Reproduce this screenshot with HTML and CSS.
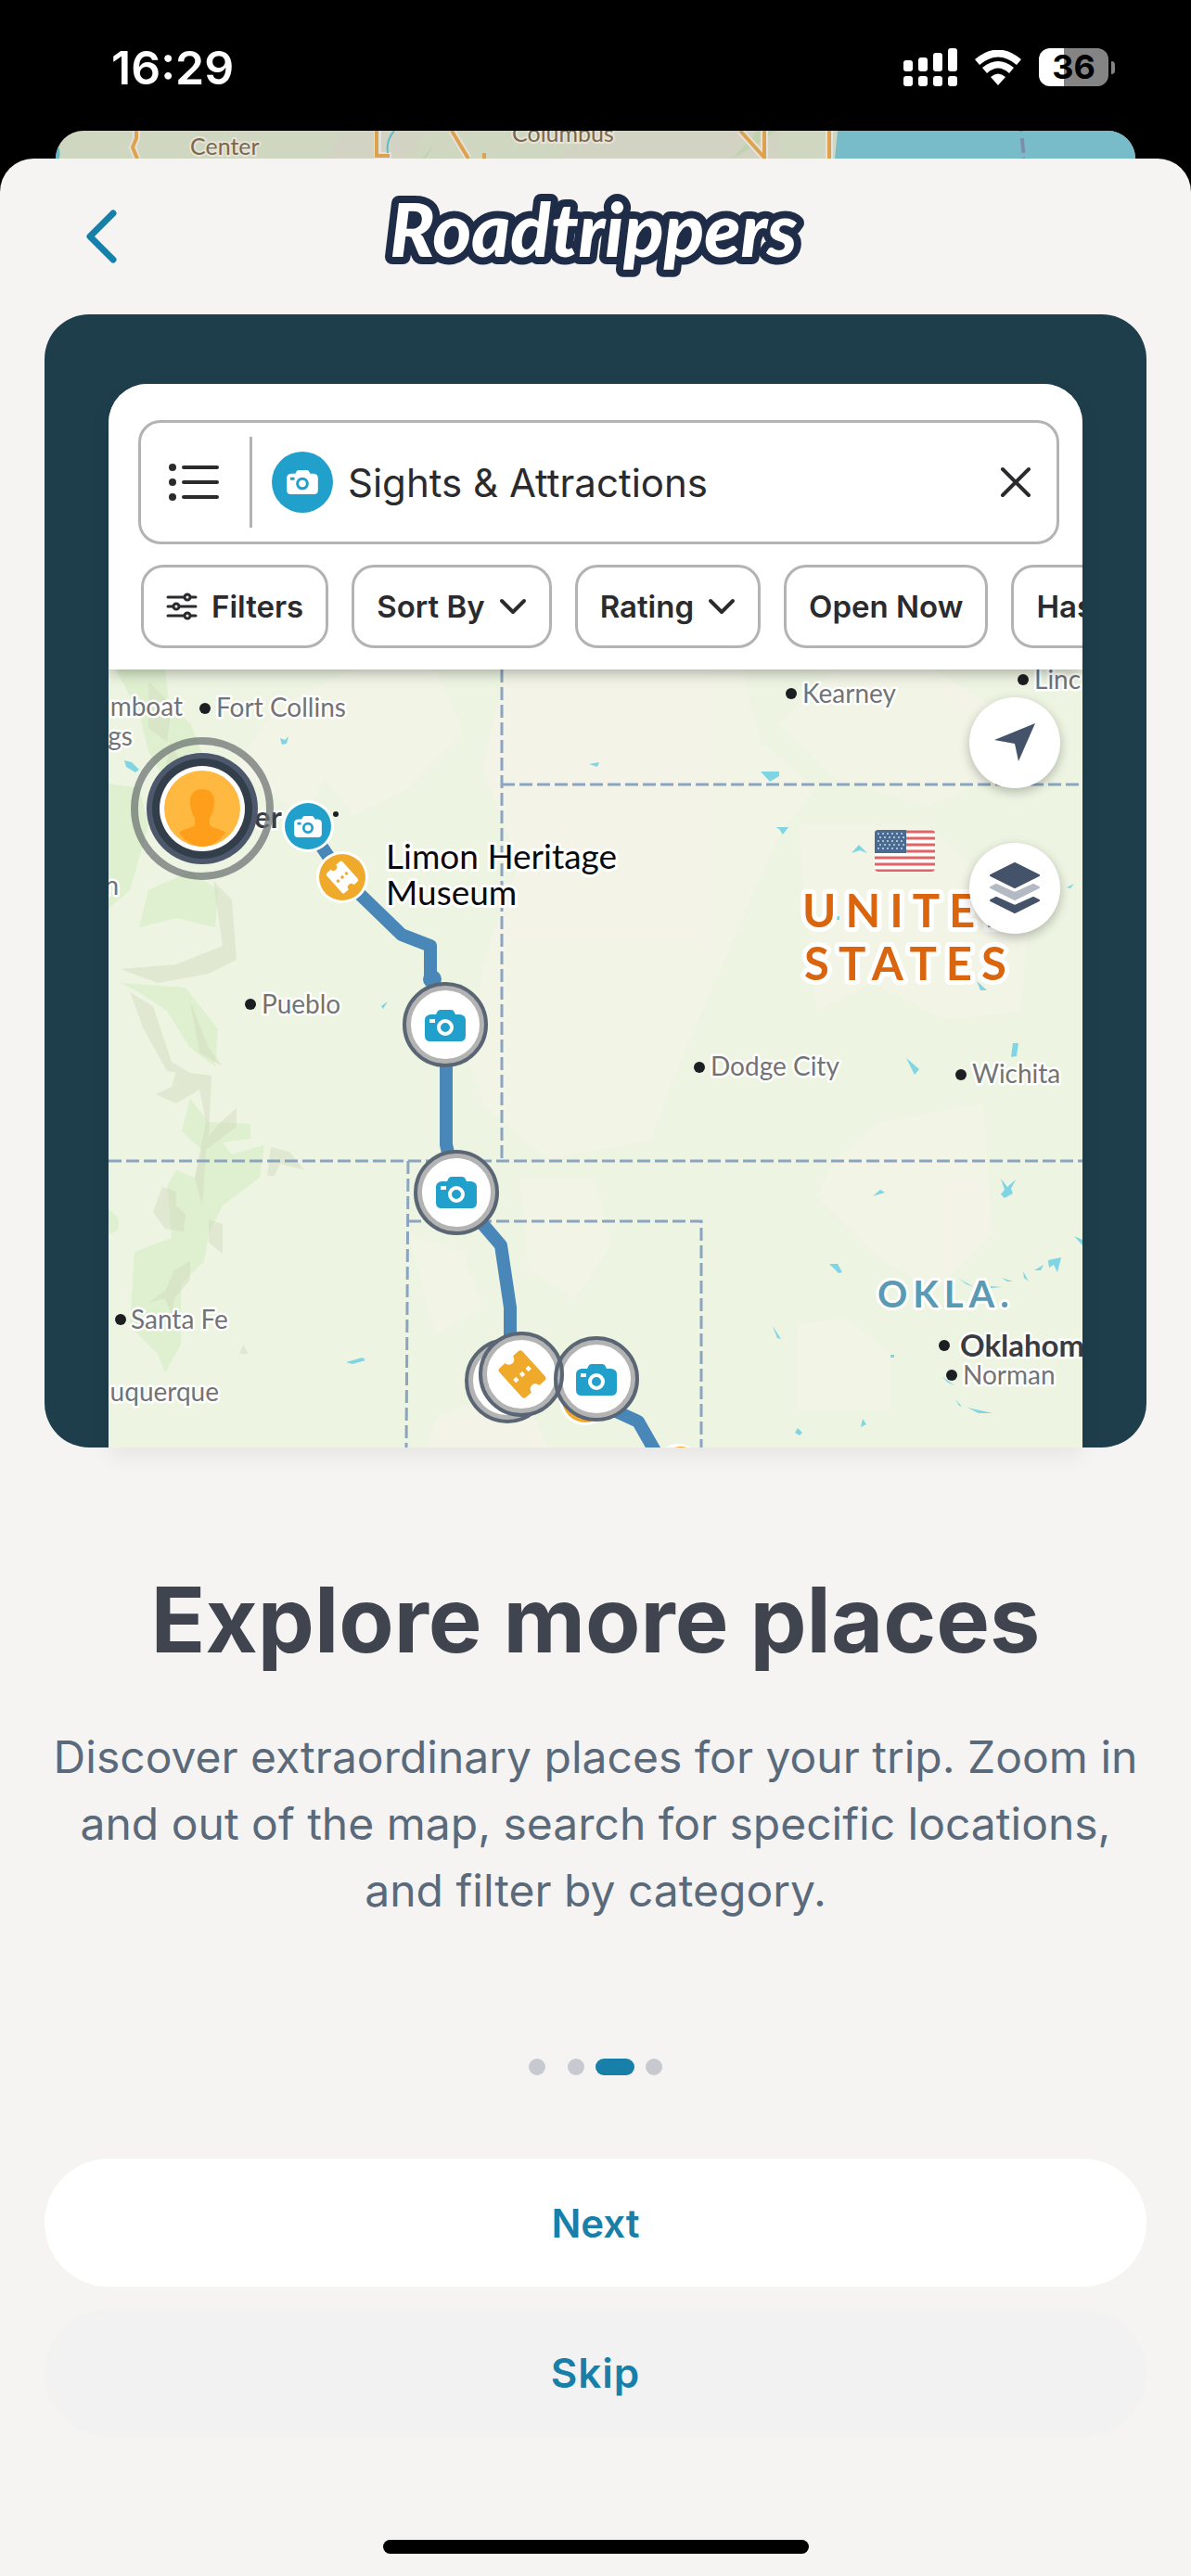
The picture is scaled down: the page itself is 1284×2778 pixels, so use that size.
FILE: index.html
```html
<!DOCTYPE html>
<html lang="en">
  <head>
    <meta charset="utf-8">
    <title>Roadtrippers</title>
    <meta name="viewport" content="width=device-width, initial-scale=1, viewport-fit=cover">
    <link rel="stylesheet" href="styles.css">
  </head>
  <body>
    <!-- shared icons -->
    <svg class="sprite" aria-hidden="true">
      <symbol id="camera" viewBox="0 0 44 34">
        <path fill="currentColor" fill-rule="evenodd" d="M13 3 Q14 0 17 0 H28 Q31 0 32 3 L33 5 H38 Q44 6 44 11 V28 Q44 34 38 34 H6 Q0 34 0 28 V11 Q0 6 6 5 H12 Z M5 10 V14 H11 V10 Z M22 10 A9 9 0 1 0 22 28 A9 9 0 1 0 22 10 Z M22 14 A5 5 0 1 1 22 24 A5 5 0 1 1 22 14 Z"/>
      </symbol>
      <symbol id="ticket" viewBox="-25 -25 50 50">
        <g transform="rotate(48)">
          <path fill="currentColor" fill-rule="evenodd" d="M-16 -15 H16 Q19 -15 19 -12 V-5 A5 5 0 0 0 19 5 V12 Q19 15 16 15 H-16 Q-19 15 -19 12 V5 A5 5 0 0 0 -19 -5 V-12 Q-19 -15 -16 -15 Z M-2 -10 V-6 H2 V-10 Z M-2 -2 V2 H2 V-2 Z M-2 6 V10 H2 V6 Z"/>
        </g>
      </symbol>
      <symbol id="chevron" viewBox="0 0 30 18">
        <path d="M3 3 L15 15 L27 3" fill="none" stroke="currentColor" stroke-width="4" stroke-linecap="round" stroke-linejoin="round"/>
      </symbol>
    </svg>

    <div class="status-bar">
      <span class="time">16:29</span>
      <div class="status-icons">
        <svg width="58" height="41" viewBox="0 0 58 41" fill="#fff">
          <rect x="0" y="13" width="10" height="12" rx="3"/>
          <rect x="16" y="10" width="10" height="15" rx="3"/>
          <rect x="32" y="5" width="10" height="20" rx="3"/>
          <rect x="48" y="0" width="10" height="25" rx="3"/>
          <rect x="0" y="30" width="10" height="11" rx="3"/>
          <rect x="16" y="30" width="10" height="11" rx="3"/>
          <rect x="32" y="30" width="10" height="11" rx="3"/>
          <rect x="48" y="30" width="10" height="11" rx="3"/>
        </svg>
        <svg width="52" height="38" viewBox="0 0 52 38" fill="#fff">
          <path d="M1 10 Q26 -11 51 10 L46 16 Q26 -1 6 16 Z"/>
          <path d="M9 19 Q26 5 43 19 L38 25 Q26 14 14 25 Z"/>
          <path d="M18 29 Q26 22 34 29 L26 38 Z"/>
        </svg>
        <div class="battery">
          <span class="battery-level">36</span>
          <span class="battery-cap"></span>
        </div>
      </div>
    </div>

    <svg class="peek" viewBox="60 141 1164 30" preserveAspectRatio="none">
      <rect x="60" y="141" width="1164" height="30" fill="#cfd7c0"/>
      <path d="M370 141 H460 L440 171 H350 Z M640 141 H840 V171 H600 Z" fill="#d3d3c4"/>
      <path d="M790 171 l16 -18 10 -12 h20 l-16 12 z M455 171 l12 -14 -8 14 z" fill="#bfd3ae"/>
      <path d="M60 152 q6 8 4 19 h-4 z" fill="#5dbccb"/>
      <g fill="none" stroke="#e4e2da" stroke-width="8">
        <path d="M147 141 v8 l-4 10 5 12 M407 141 v27 h15 M487 141 l18 30 M798 141 l27 30 M824 141 v30 M894 141 v30"/>
      </g>
      <g fill="none" stroke="#dda24e" stroke-width="4">
        <path d="M147 141 v8 l-4 10 5 12 M406 141 v27 h14 M487 141 l18 30 M798 141 l27 30 M824 141 v30 M894 141 v30 M522 165 v6"/>
      </g>
      <path d="M425 141 q-9 10 -7 24" fill="none" stroke="#5dbccb" stroke-width="2"/>
      <path d="M903 141 H1224 V171 H900 Z" fill="#78bcca"/>
      <path d="M1101 141 l3 30" stroke="#7f8cae" stroke-width="4" stroke-dasharray="1 7 16 5" fill="none"/>
      <text class="peek-label" x="205" y="167">Center</text>
      <text class="peek-label" x="552" y="153">Columbus</text>
    </svg>

    <main class="sheet">
      <header class="sheet-header">
        <button class="back" type="button" aria-label="Back">
          <svg width="34" height="58" viewBox="0 0 34 58">
            <path d="M30 4 L5 29 L30 54" fill="none" stroke="#1780a8" stroke-width="7" stroke-linecap="round" stroke-linejoin="round"/>
          </svg>
        </button>
        <svg class="logo" width="480" height="120" viewBox="0 0 480 120">
          <text x="238" y="82" text-anchor="middle">Roadtrippers</text>
        </svg>
      </header>

      <section class="hero">
        <div class="panel">
          <div class="panel-top">
            <div class="search">
              <button class="icon-button list-button" type="button" aria-label="List">
                <svg width="54" height="40" viewBox="0 0 54 40">
                  <g fill="#2b2b2d"><circle cx="4" cy="4" r="4"/><circle cx="4" cy="20" r="4"/><circle cx="4" cy="36" r="4"/></g>
                  <path d="M16 4 H52 M16 20 H52 M16 36 H52" stroke="#2b2b2d" stroke-width="4" stroke-linecap="round"/>
                </svg>
              </button>
              <span class="divider"></span>
              <span class="category"><svg width="34" height="26"><use href="#camera"/></svg></span>
              <input class="search-input" type="text" value="Sights &amp; Attractions" aria-label="Search places">
              <button class="icon-button" type="button" aria-label="Clear">
                <svg width="34" height="34" viewBox="0 0 34 34">
                  <path d="M3 3 L31 31 M31 3 L3 31" stroke="#2b2b2d" stroke-width="4" stroke-linecap="round"/>
                </svg>
              </button>
            </div>
            <div class="chips">
              <button class="chip" type="button">
                <svg width="34" height="30" viewBox="0 0 34 30" fill="#fff" stroke="#2b2b2d" stroke-width="3" stroke-linecap="round">
                  <path d="M2 5 H32 M2 15 H32 M2 25 H32"/>
                  <circle cx="23" cy="5" r="3"/><circle cx="11" cy="15" r="3"/><circle cx="23" cy="25" r="3"/>
                </svg>
                Filters
              </button>
              <button class="chip" type="button">Sort By <svg width="30" height="18"><use href="#chevron"/></svg></button>
              <button class="chip" type="button">Rating <svg width="30" height="18"><use href="#chevron"/></svg></button>
              <button class="chip" type="button">Open Now</button>
              <button class="chip" type="button">Has</button>
            </div>
          </div>

          <div class="map">
            <svg class="map-canvas" viewBox="117 722 1050 839">
              <rect x="117" y="722" width="1050" height="839" fill="#edf4e1"/>
              <!-- plains -->
              <g fill="#f4f4e8" opacity=".8">
                <path d="M380 722 H470 L500 790 L440 850 L380 880 L350 840 L330 880 L250 830 L300 760 Z"/>
                <path d="M545 722 H800 L820 800 L880 850 L840 900 L800 990 L770 1060 L740 1130 L700 1230 L590 1250 L520 1190 L500 1130 L530 1010 L560 930 L520 830 Z"/>
                <path d="M900 722 H1010 L1080 770 L1090 830 L1000 870 L900 840 L840 780 Z"/>
                <path d="M860 890 H1000 L1110 990 L1100 1090 L1020 1100 L940 1060 L880 1090 Z"/>
                <path d="M950 1210 L1060 1190 L1070 1330 L1010 1390 L950 1360 L880 1290 L900 1250 Z"/>
                <path d="M560 1270 H640 L660 1340 L620 1400 L570 1370 Z M860 1430 L910 1420 L960 1460 V1520 H860 Z M440 1330 L500 1350 L520 1410 L470 1440 Z"/>
                <path d="M470 1530 L560 1490 L590 1561 H460 Z"/>
              </g>
              <!-- forests -->
              <g fill="#d9efc9" opacity=".75">
                <path d="M125 722 H178 L182 760 L205 780 L225 830 L215 850 L180 845 L160 810 L150 770 Z"/>
                <path d="M117 845 L150 850 L160 890 L140 960 L117 980 Z"/>
                <path d="M160 960 L205 940 L235 960 L232 1000 L190 990 L150 1000 Z"/>
                <path d="M130 1060 L200 1065 L235 1110 L232 1150 L205 1130 L180 1090 L150 1070 Z"/>
                <path d="M205 1185 L225 1210 L270 1212 V1228 L240 1232 L250 1245 L285 1235 L280 1270 L240 1300 L225 1330 L220 1360 L195 1385 V1450 L178 1480 L170 1460 L140 1430 L145 1350 L185 1335 L180 1280 L190 1262 L210 1270 L218 1240 L196 1220 Z"/>
                <path d="M117 1305 q14 6 10 22 l-10 4 z"/>
              </g>
              <g fill="#cdd3b6" opacity=".35">
                <path d="M160 735 L185 760 L180 800 L160 785 Z M185 800 L210 860 L190 890 L175 840 Z"/>
                <path d="M230 950 L250 970 L255 1035 L225 1050 L170 1060 L130 1045 L190 1040 L240 1020 Z"/>
                <path d="M140 1070 L165 1085 L185 1145 L210 1160 L180 1155 L155 1110 Z M205 1080 L225 1130 L240 1150 L215 1135 Z"/>
                <path d="M190 1155 L228 1160 L225 1225 L238 1210 L255 1195 V1215 L222 1240 L218 1300 L210 1270 L222 1210 L215 1175 L190 1190 L168 1180 L185 1172 Z"/>
                <path d="M175 1280 L190 1285 V1300 L200 1310 L198 1328 L178 1325 L165 1307 Z M225 1315 L240 1320 V1352 L225 1340 Z M188 1370 L205 1360 V1380 L188 1400 L185 1418 L178 1400 L160 1405 L178 1392 Z"/>
                <path d="M292 1237 L312 1242 L328 1262 L302 1255 L296 1268 H288 Z M262 1450 l6 10 h-10 z"/>
              </g>
              <!-- lakes -->
              <g fill="#7fd5e3">
                <path d="M134 820 l8 2 8 8 -4 3 -10 -6 z M302 796 l5 2 4 -4 -2 8 -5 1 z M635 824 l11 -2 -2 5 z"/>
                <path d="M820 832 h20 v5 l-10 6 z M836 892 h14 l-6 8 -4 -6 z M918 920 l8 -9 9 9 -8 -3 z M1150 957 l8 -4 -4 5 z"/>
                <path d="M977 1141 l14 12 -5 6 z M1092 1125 h6 l-2 14 -6 1 z M1053 1058 l11 10 h-7 z M900 988 h5 v4 h-5 z M411 1085 l7 -5 -5 8 z"/>
                <path d="M941 1290 l8 -7 5 3 z M1079 1271 l7 9 9 -8 -5 10 2 5 -9 5 -4 -4 4 -5 z M894 1363 h9 l5 9 -4 1 z M833 1430 l9 14 -4 -1 z"/>
                <path d="M1034 1379 l16 9 -8 -3 z M1068 1387 l12 1 -12 1 z M1080 1378 l12 4 -6 0 z M1103 1371 l6 11 -5 -4 z M1115 1370 l10 -6 -3 6 z M1130 1359 l14 -3 -4 16 -4 -8 -5 3 z M1158 1333 l9 4 v6 z"/>
                <path d="M1015 1484 l14 10 -7 -3 z M1030 1509 l7 8 -3 -1 z M1043 1518 l27 6 -15 0 z M860 1540 l5 5 -3 3 -5 -3 z M930 1530 l4 6 -6 3 z M960 1461 h4 v3 h-4 z M373 1469 l18 -5 3 3 -14 4 z"/>
              </g>
              <!-- state borders -->
              <g fill="none" stroke="#8ba4bf" stroke-width="3" stroke-dasharray="14 5">
                <path d="M541 722 V1252"/>
                <path d="M541 846 H1167"/>
                <path d="M117 1252 H1167"/>
                <path d="M440 1252 L438 1561"/>
                <path d="M440 1317 H756 V1561"/>
              </g>

              <g class="city">
                <text x="197" y="772" text-anchor="end">mboat</text>
                <text x="143" y="804" text-anchor="end">gs</text>
                <text x="128" y="965" text-anchor="end">n</text>
                <text x="233" y="773">Fort Collins</text>
                <text x="282" y="1093">Pueblo</text>
                <text x="865" y="758">Kearney</text>
                <text x="1115" y="743">Linc</text>
                <text x="766" y="1160">Dodge City</text>
                <text x="1048" y="1168">Wichita</text>
                <text x="1038" y="1493">Norman</text>
                <text x="141" y="1433">Santa Fe</text>
                <text x="236" y="1511" text-anchor="end">uquerque</text>
              </g>
              <g class="capital">
                <text x="274" y="893">er</text>
                <text x="1035" y="1463">Oklahom</text>
              </g>
              <g fill="#1c1e22">
                <circle cx="221" cy="764" r="6"/><circle cx="270" cy="1083" r="6"/><circle cx="853" cy="748" r="6"/>
                <circle cx="1103" cy="733" r="6"/><circle cx="754" cy="1151" r="6"/><circle cx="1036" cy="1159" r="6"/>
                <circle cx="1026" cy="1483" r="6"/><circle cx="130" cy="1423" r="6"/><circle cx="1018" cy="1451" r="6"/>
                <circle cx="362" cy="878" r="3"/>
              </g>
              <text class="state" x="946" y="1410">OKLA.</text>
              <g class="country">
                <text x="865" y="1000">UNITED</text>
                <text x="867" y="1057">STATES</text>
              </g>

              <!-- flag -->
              <svg x="943" y="895" width="65" height="45" viewBox="0 0 65 45" opacity=".85">
                <clipPath id="flag"><rect width="65" height="45" rx="4"/></clipPath>
                <g clip-path="url(#flag)">
                  <rect width="65" height="45" fill="#fff"/>
                  <path d="M0 2 H65 M0 9 H65 M0 16 H65 M0 23 H65 M0 30 H65 M0 37 H65 M0 44 H65" stroke="#e04a50" stroke-width="3"/>
                  <rect width="34" height="25" fill="#2c5484"/>
                  <path d="M3 4 H33 M5 8 H33 M3 12 H33 M5 16 H33 M3 20 H33" stroke="#9fb6cd" stroke-width="2" stroke-dasharray="2 3"/>
                </g>
              </svg>

              <!-- route -->
              <g fill="none" stroke="#4887b8" stroke-width="14" stroke-linejoin="round">
                <path d="M332 891 L369 946 L433 1008 L464 1020 V1052 L480 1105"/>
                <path d="M481 1105 V1234 L492 1286 L522 1322 L540 1343 L550 1410 V1482"/>
                <path d="M643 1487 L664 1522 L688 1533 L708 1568"/>
              </g>
              <circle cx="466" cy="1056" r="10" fill="#4887b8"/>

              <g class="callout">
                <text x="416" y="937">Limon Heritage</text>
                <text x="416" y="976">Museum</text>
              </g>

              <!-- stops -->
              <circle cx="332" cy="891" r="28" fill="#fff"/>
              <circle cx="332" cy="891" r="25" fill="#22a0cc"/>
              <use href="#camera" x="317" y="880" width="30" height="23" color="#fff"/>
              <circle cx="369" cy="946" r="28" fill="#fff"/>
              <circle cx="369" cy="946" r="25" fill="#efaa2c"/>
              <use href="#ticket" x="350" y="927" width="38" height="38" color="#fff"/>
              <circle cx="631" cy="1509" r="28" fill="#fff"/>
              <circle cx="631" cy="1509" r="25" fill="#efaa2c"/>
              <circle cx="731" cy="1585" r="28" fill="#fff"/>
              <circle cx="734" cy="1585" r="25" fill="#efaa2c"/>

              <g fill="#fff" stroke="#b3b3b3" stroke-width="6">
                <circle cx="480" cy="1105" r="40"/>
                <circle cx="492" cy="1286" r="40"/>
                <circle cx="547" cy="1489" r="40"/>
              </g>
              <g fill="none" stroke="#5b6675" stroke-width="4">
                <circle cx="480" cy="1105" r="44"/>
                <circle cx="492" cy="1286" r="44"/>
                <circle cx="547" cy="1489" r="44"/>
              </g>
              <g fill="#fff" stroke="#b3b3b3" stroke-width="6">
                <circle cx="562" cy="1482" r="40"/>
                <circle cx="643" cy="1487" r="40"/>
              </g>
              <g fill="none" stroke="#5b6675" stroke-width="4">
                <circle cx="562" cy="1482" r="44"/>
                <circle cx="643" cy="1487" r="44"/>
              </g>
              <g color="#22a0cc">
                <use href="#camera" x="458" y="1089" width="44" height="34"/>
                <use href="#camera" x="470" y="1269" width="44" height="34"/>
                <use href="#camera" x="621" y="1471" width="44" height="34"/>
              </g>
              <use href="#ticket" x="535" y="1454" width="56" height="56" color="#efaa2c"/>

              <!-- current user -->
              <circle cx="218" cy="872" r="73" fill="none" stroke="#6f7674" stroke-opacity=".75" stroke-width="8"/>
              <circle cx="218" cy="872" r="60" fill="#4d586d"/>
              <circle cx="218" cy="872" r="54" fill="#323e49"/>
              <circle cx="218" cy="872" r="46" fill="#fff"/>
              <circle cx="218" cy="872" r="41" fill="#ffb840"/>
              <path d="M218 851 C227 851 232 857 231 867 C230 874 228 880 226 882 V889 C227 893 237 893 243 898 Q232 913 218 913 Q204 913 193 898 C199 893 209 893 210 889 V882 C208 880 206 874 205 867 C204 857 209 851 218 851 Z" fill="#ff9e1b"/>
            </svg>

            <div class="map-buttons">
              <button class="round-button" type="button" aria-label="My location">
                <svg width="44" height="44" viewBox="0 0 44 44"><path d="M44 1 L26 42 L22 23 L0 19 Z" fill="#44536a"/></svg>
              </button>
              <button class="round-button" type="button" aria-label="Map layers">
                <svg width="56" height="56" viewBox="0 0 56 56" stroke-linejoin="round" stroke-width="2">
                  <path d="M28 1 L54 14 L28 27 L2 14 Z" fill="#44536a" stroke="#44536a"/>
                  <path d="M8 24 L28 33 L48 24 L54 27 L28 40 L2 27 Z" fill="#b4bac4" stroke="#b4bac4"/>
                  <path d="M8 38 L28 47 L48 38 L54 41 L28 54 L2 41 Z" fill="#44536a" stroke="#44536a"/>
                </svg>
              </button>
            </div>
          </div>
        </div>
      </section>

      <section class="copy">
        <h1>Explore more places</h1>
        <p>Discover extraordinary places for your trip. Zoom in and out of the map, search for specific locations, and filter by category.</p>
      </section>

      <div class="dots">
        <span class="dot"></span>
        <span class="dot"></span>
        <span class="dot active"></span>
        <span class="dot"></span>
      </div>

      <div class="actions">
        <button class="action next" type="button">Next</button>
        <button class="action skip" type="button">Skip</button>
      </div>

      <div class="home-indicator"></div>
    </main>
  </body>
</html>
```
FILE: styles.css
```css
* {
  box-sizing: border-box;
}
body {
  display: flex;
  flex-direction: column;
  min-height: 100vh;
  margin: 0;
  background: #000;
  font-family: Inter, "Liberation Sans", sans-serif;
}
button {
  padding: 0;
  border: none;
  background: none;
  color: inherit;
  font: inherit;
}
svg {
  display: block;
  flex-shrink: 0;
}
.sprite {
  position: absolute;
  width: 0;
  height: 0;
}

/* status bar */
.status-bar {
  display: flex;
  justify-content: space-between;
  align-items: center;
  height: 141px;
  padding: 4px 82px 0 120px;
  color: #fff;
}
.time {
  font-size: 50px;
  font-weight: 600;
}
.status-icons {
  display: flex;
  align-items: center;
  gap: 18px;
}
.battery {
  display: flex;
  align-items: center;
  gap: 3px;
}
.battery-level {
  width: 75px;
  border-radius: 12px;
  background: linear-gradient(to right, #fff 36%, #848484 36%);
  color: #000;
  font-size: 36px;
  font-weight: 700;
  line-height: 41px;
  text-align: center;
}
.battery-cap {
  width: 4px;
  height: 14px;
  border-radius: 0 4px 4px 0;
  background: #848484;
}

/* edge of the screen behind the sheet */
.peek {
  align-self: stretch;
  height: 30px;
  margin: 0 60px;
  border-radius: 30px 30px 0 0;
}
.peek-label {
  fill: #7d6848;
  stroke: #e4e4da;
  stroke-width: 4px;
  paint-order: stroke;
  font: 25px Lato, sans-serif;
}

.sheet {
  display: flex;
  flex: 1;
  flex-direction: column;
  padding: 0 48px 24px;
  border-radius: 36px 36px 0 0;
  background: #f5f4f2;
}
.sheet-header {
  display: grid;
  grid-template-columns: 1fr auto 1fr;
  align-items: center;
  height: 168px;
}
.back {
  justify-self: start;
  margin-left: 44px;
}
.logo text {
  fill: #fff;
  stroke: #1f2c47;
  stroke-width: 16px;
  stroke-linejoin: round;
  paint-order: stroke;
  font: italic 900 80px Lato, sans-serif;
}

/* preview card */
.hero {
  padding: 75px 69px 0;
  border-radius: 48px;
  background: #1e3e4c;
}
.panel {
  overflow: hidden;
  border-radius: 42px 42px 0 0;
  background: #fff;
  box-shadow: 0 10px 24px rgba(0, 0, 0, 0.06);
}
.panel-top {
  position: relative;
  z-index: 1;
  padding: 39px 0 23px 32px;
  background: #fff;
  box-shadow: 0 2px 16px rgba(0, 0, 0, 0.35);
}
.search {
  display: flex;
  align-items: center;
  height: 134px;
  margin-right: 25px;
  padding: 0 27px 0 30px;
  border: 3px solid #b3b3b3;
  border-radius: 24px;
}
.divider {
  width: 3px;
  height: 98px;
  margin: 0 21px 0 33px;
  background: #b3b3b3;
}
.category {
  display: flex;
  flex-shrink: 0;
  justify-content: center;
  align-items: center;
  width: 66px;
  height: 66px;
  border-radius: 50%;
  background: #22a0cc;
  color: #fff;
}
.search-input {
  flex: 1;
  min-width: 0;
  padding: 0 16px;
  border: none;
  outline: none;
  background: none;
  color: #2b2b2d;
  font: 42px Inter, sans-serif;
}
.chips {
  display: flex;
  gap: 25px;
  overflow: hidden;
  margin-top: 22px;
  padding-left: 3px;
}
.chip {
  display: flex;
  flex-shrink: 0;
  align-items: center;
  gap: 15px;
  height: 90px;
  padding: 0 24px;
  border: 3px solid #b3b3b3;
  border-radius: 24px;
  color: #2b2b2d;
  font-size: 33px;
  font-weight: 600;
}

/* map */
.map {
  position: relative;
}
.map-canvas {
  width: 100%;
  height: auto;
}
.map-canvas text {
  stroke: #fff;
  stroke-linejoin: round;
  paint-order: stroke;
  font-family: Lato, sans-serif;
}
.city text {
  fill: #717375;
  stroke-width: 5px;
  font-size: 28px;
}
.capital text {
  fill: #3b3c3f;
  stroke-width: 5px;
  font-size: 33px;
  font-weight: 700;
}
.callout text {
  fill: #0a0a0a;
  stroke-width: 6px;
  font-size: 37px;
}
.map-canvas .state {
  fill: #5a9ab4;
  stroke-width: 6px;
  font-size: 40px;
  font-weight: 700;
  letter-spacing: 6px;
}
.country text {
  fill: #d9660f;
  stroke-width: 10px;
  font-size: 49px;
  font-weight: 700;
  letter-spacing: 10px;
}
.map-buttons {
  position: absolute;
  top: 30px;
  right: 24px;
  display: flex;
  flex-direction: column;
  gap: 59px;
}
.round-button {
  display: flex;
  justify-content: center;
  align-items: center;
  width: 98px;
  height: 98px;
  border-radius: 50%;
  background: #fff;
  box-shadow: 0 4px 12px rgba(0, 0, 0, 0.25);
}

/* text */
.copy {
  margin-top: 126px;
  text-align: center;
}
.copy h1 {
  margin: 0;
  color: #40444e;
  font-size: 97px;
  font-weight: 700;
  line-height: 120px;
}
.copy p {
  margin: 52px 0 0;
  color: #5a6a7b;
  font-size: 48px;
  line-height: 72px;
}

.dots {
  display: flex;
  justify-content: center;
  gap: 12px;
  margin-top: 145px;
}
.dot {
  width: 18px;
  height: 18px;
  border-radius: 9px;
  background: #c6cad0;
}
.dot:first-child {
  margin-right: 12px;
}
.dot.active {
  width: 42px;
  background: #177fa8;
}

.actions {
  display: flex;
  flex-direction: column;
  gap: 24px;
  margin-top: 90px;
}
.action {
  height: 138px;
  border-radius: 69px;
  background: #fff;
  color: #177fa8;
  font-size: 42px;
  font-weight: 600;
}
.skip {
  background: #f2f2f2;
  font-size: 44px;
  letter-spacing: 1px;
}
.home-indicator {
  align-self: center;
  width: 459px;
  height: 15px;
  margin-top: auto;
  border-radius: 8px;
  background: #000;
}
```
